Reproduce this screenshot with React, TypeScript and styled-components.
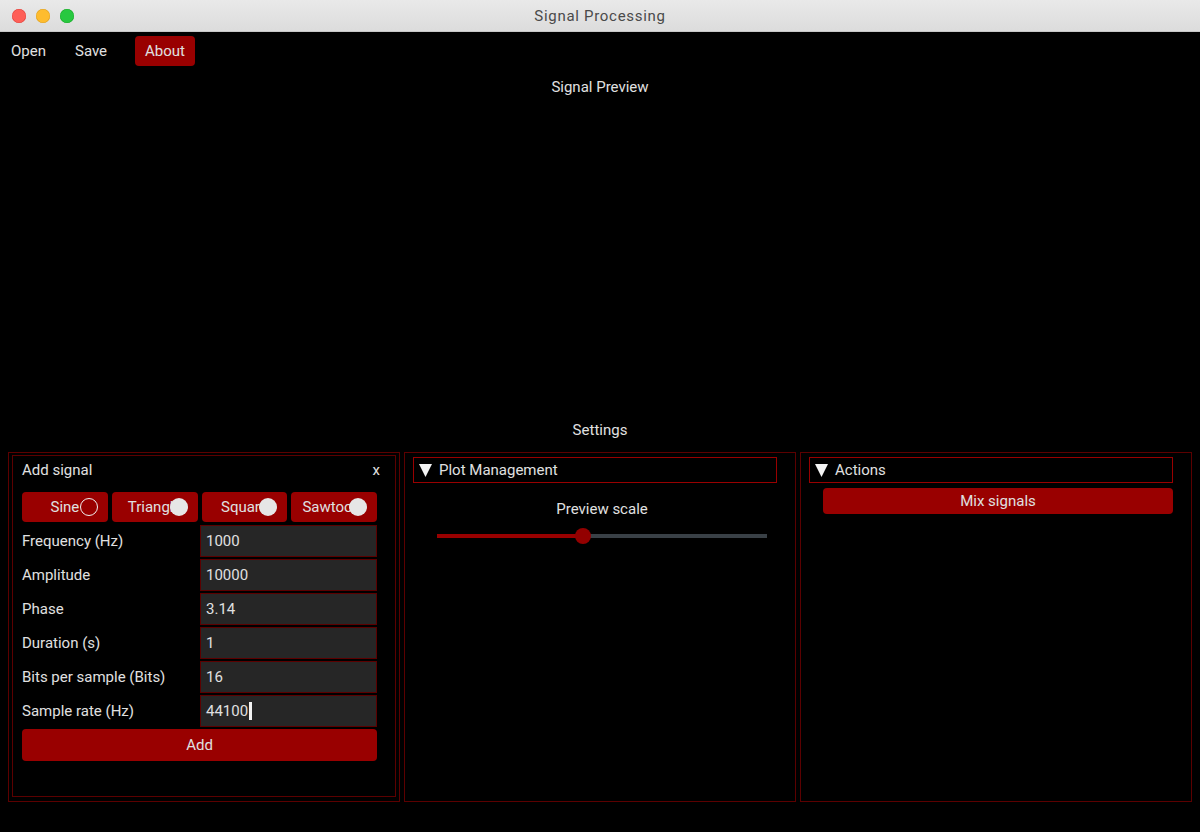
import React from 'react'
import styled, { createGlobalStyle } from 'styled-components'

const red = '#990000'
const dimRed = '#5c0000'
const text = '#e0e0e0'

const GlobalStyle = createGlobalStyle`
  html, body {
    margin: 0;
    padding: 0;
    background: #000;
  }
  body {
    font-family: Roboto, 'Liberation Sans', sans-serif;
    font-size: 15px;
    color: ${text};
  }
`

const Page = styled.div`
  width: 1200px;
  height: 832px;
  display: flex;
  flex-direction: column;
  background: #000;
  overflow: hidden;
`

const TitleBar = styled.div`
  height: 32px;
  flex: none;
  display: flex;
  align-items: center;
  position: relative;
  background: linear-gradient(#e9e9e9, #dcdcdc);
  border-bottom: 1px solid #c8c8c8;
  box-sizing: border-box;
`

const Lights = styled.div`
  display: flex;
  gap: 10px;
  padding-left: 12px;
`

const Light = styled.span<{ $color: string; $edge: string }>`
  width: 14px;
  height: 14px;
  border-radius: 50%;
  background: ${(p) => p.$color};
  box-shadow: inset 0 0 0 0.5px ${(p) => p.$edge};
`

const WindowTitle = styled.div`
  position: absolute;
  left: 0;
  right: 0;
  text-align: center;
  font-size: 15px;
  letter-spacing: 0.7px;
  color: #4a4a4a;
  pointer-events: none;
`

const MenuBar = styled.div`
  height: 36px;
  flex: none;
  display: flex;
  align-items: flex-start;
  padding: 4px 0 0 1px;
  box-sizing: border-box;
  gap: 9px;
`

const MenuItem = styled.div<{ $active?: boolean }>`
  height: 30px;
  display: flex;
  align-items: center;
  padding: 0 10px;
  border-radius: 4px;
  background: ${(p) => (p.$active ? red : 'transparent')};
  margin-left: ${(p) => (p.$active ? '9px' : '0')};
`

const SectionTitle = styled.div<{ $top: number }>`
  text-align: center;
  line-height: 18px;
  margin-top: ${(p) => p.$top}px;
`

const PreviewArea = styled.div`
  height: 325px;
  flex: none;
`

const PanelRow = styled.div`
  display: grid;
  grid-template-columns: repeat(3, 1fr);
  gap: 4px;
  padding: 0 8px;
  margin-top: 13px;
  height: 350px;
`

const Panel = styled.div<{ $pad: string }>`
  border: 1px solid ${dimRed};
  padding: ${(p) => p.$pad};
  display: flex;
  flex-direction: column;
  min-width: 0;
`

const SubWindow = styled.div`
  flex: 1;
  border: 1px solid ${dimRed};
  padding: 0 18px 0 9px;
  display: flex;
  flex-direction: column;
`

const WindowHead = styled.div`
  height: 28px;
  display: flex;
  align-items: center;
  justify-content: space-between;
  margin-bottom: 8px;
`

const Close = styled.span`
  margin-right: -3px;
`

const RadioRow = styled.div`
  display: grid;
  grid-template-columns: repeat(4, 1fr);
  gap: 4px;
  margin-bottom: 3px;
`

const RadioButton = styled.div`
  position: relative;
  height: 30px;
  border-radius: 4px;
  background: ${red};
  display: flex;
  align-items: center;
  justify-content: center;
  overflow: hidden;
  white-space: nowrap;
`

const RadioDot = styled.span<{ $checked: boolean }>`
  position: absolute;
  right: 10px;
  top: 6px;
  width: 18px;
  height: 18px;
  box-sizing: border-box;
  border-radius: 50%;
  background: ${(p) => (p.$checked ? 'transparent' : '#e6e6e6')};
  border: ${(p) => (p.$checked ? '1.5px solid #f0f0f0' : 'none')};
`

const FieldRow = styled.div`
  display: grid;
  grid-template-columns: 178px 1fr;
  align-items: center;
  margin-bottom: 2px;
`

const Field = styled.div`
  height: 32px;
  box-sizing: border-box;
  background: #262626;
  border: 1px solid ${dimRed};
  display: flex;
  align-items: center;
  padding-left: 5px;
`

const Caret = styled.span`
  display: inline-block;
  width: 3px;
  height: 18px;
  background: #f2f2f2;
  margin-left: 1px;
`

const WideButton = styled.div<{ $height: number; $indent?: number }>`
  height: ${(p) => p.$height}px;
  margin-left: ${(p) => p.$indent || 0}px;
  border-radius: 4px;
  background: ${red};
  display: flex;
  align-items: center;
  justify-content: center;
`

const Header = styled.div`
  height: 26px;
  box-sizing: border-box;
  border: 1px solid ${red};
  display: flex;
  align-items: center;
  gap: 7px;
  padding-left: 5px;
`

const SliderBlock = styled.div`
  padding: 17px 10px 0 24px;
  display: flex;
  flex-direction: column;
  align-items: center;
`

const SliderLabel = styled.div`
  line-height: 18px;
  margin-bottom: 16px;
`

const Track = styled.div`
  position: relative;
  width: 100%;
  height: 4px;
  background: #394046;
`

const TrackFill = styled.div`
  height: 100%;
  background: ${red};
`

const Knob = styled.div`
  position: absolute;
  top: -6px;
  width: 16px;
  height: 16px;
  margin-left: -8px;
  border-radius: 50%;
  background: #930000;
`

const Arrow = () => (
  <svg width="13" height="13" viewBox="0 0 13 13">
    <polygon points="0,0 13,0 6.5,13" fill="#f4f4f4" />
  </svg>
)

const signals = ['Sine', 'Triangle', 'Square', 'Sawtooth']

const fields = [
  { label: 'Frequency (Hz)', value: '1000' },
  { label: 'Amplitude', value: '10000' },
  { label: 'Phase', value: '3.14' },
  { label: 'Duration (s)', value: '1' },
  { label: 'Bits per sample (Bits)', value: '16' },
  { label: 'Sample rate (Hz)', value: '44100', focused: true },
]

const previewScale = 0.442

const App: React.FC = () => {
  return (
    <Page>
      <GlobalStyle />
      <TitleBar>
        <Lights>
          <Light $color="#fe5f57" $edge="#e0443e" />
          <Light $color="#febc2e" $edge="#dea123" />
          <Light $color="#28c840" $edge="#1aab29" />
        </Lights>
        <WindowTitle>Signal Processing</WindowTitle>
      </TitleBar>

      <MenuBar>
        <MenuItem>Open</MenuItem>
        <MenuItem>Save</MenuItem>
        <MenuItem $active>About</MenuItem>
      </MenuBar>

      <SectionTitle $top={10}>Signal Preview</SectionTitle>
      <PreviewArea />
      <SectionTitle $top={0}>Settings</SectionTitle>

      <PanelRow>
        <Panel $pad="2px 3px 4px 3px">
          <SubWindow>
            <WindowHead>
              <span>Add signal</span>
              <Close>x</Close>
            </WindowHead>
            <RadioRow>
              {signals.map((s, i) => (
                <RadioButton key={s}>
                  {s}
                  <RadioDot $checked={i === 0} />
                </RadioButton>
              ))}
            </RadioRow>
            {fields.map((f) => (
              <FieldRow key={f.label}>
                <span>{f.label}</span>
                <Field>
                  {f.value}
                  {f.focused && <Caret />}
                </Field>
              </FieldRow>
            ))}
            <WideButton $height={32}>Add</WideButton>
          </SubWindow>
        </Panel>

        <Panel $pad="4px 18px 4px 8px">
          <Header>
            <Arrow />
            <span>Plot Management</span>
          </Header>
          <SliderBlock>
            <SliderLabel>Preview scale</SliderLabel>
            <Track>
              <TrackFill style={{ width: `${previewScale * 100}%` }} />
              <Knob style={{ left: `${previewScale * 100}%` }} />
            </Track>
          </SliderBlock>
        </Panel>

        <Panel $pad="4px 18px 4px 8px">
          <Header>
            <Arrow />
            <span>Actions</span>
          </Header>
          <div style={{ height: 5 }} />
          <WideButton $height={26} $indent={14}>
            Mix signals
          </WideButton>
        </Panel>
      </PanelRow>
    </Page>
  )
}

export default App
